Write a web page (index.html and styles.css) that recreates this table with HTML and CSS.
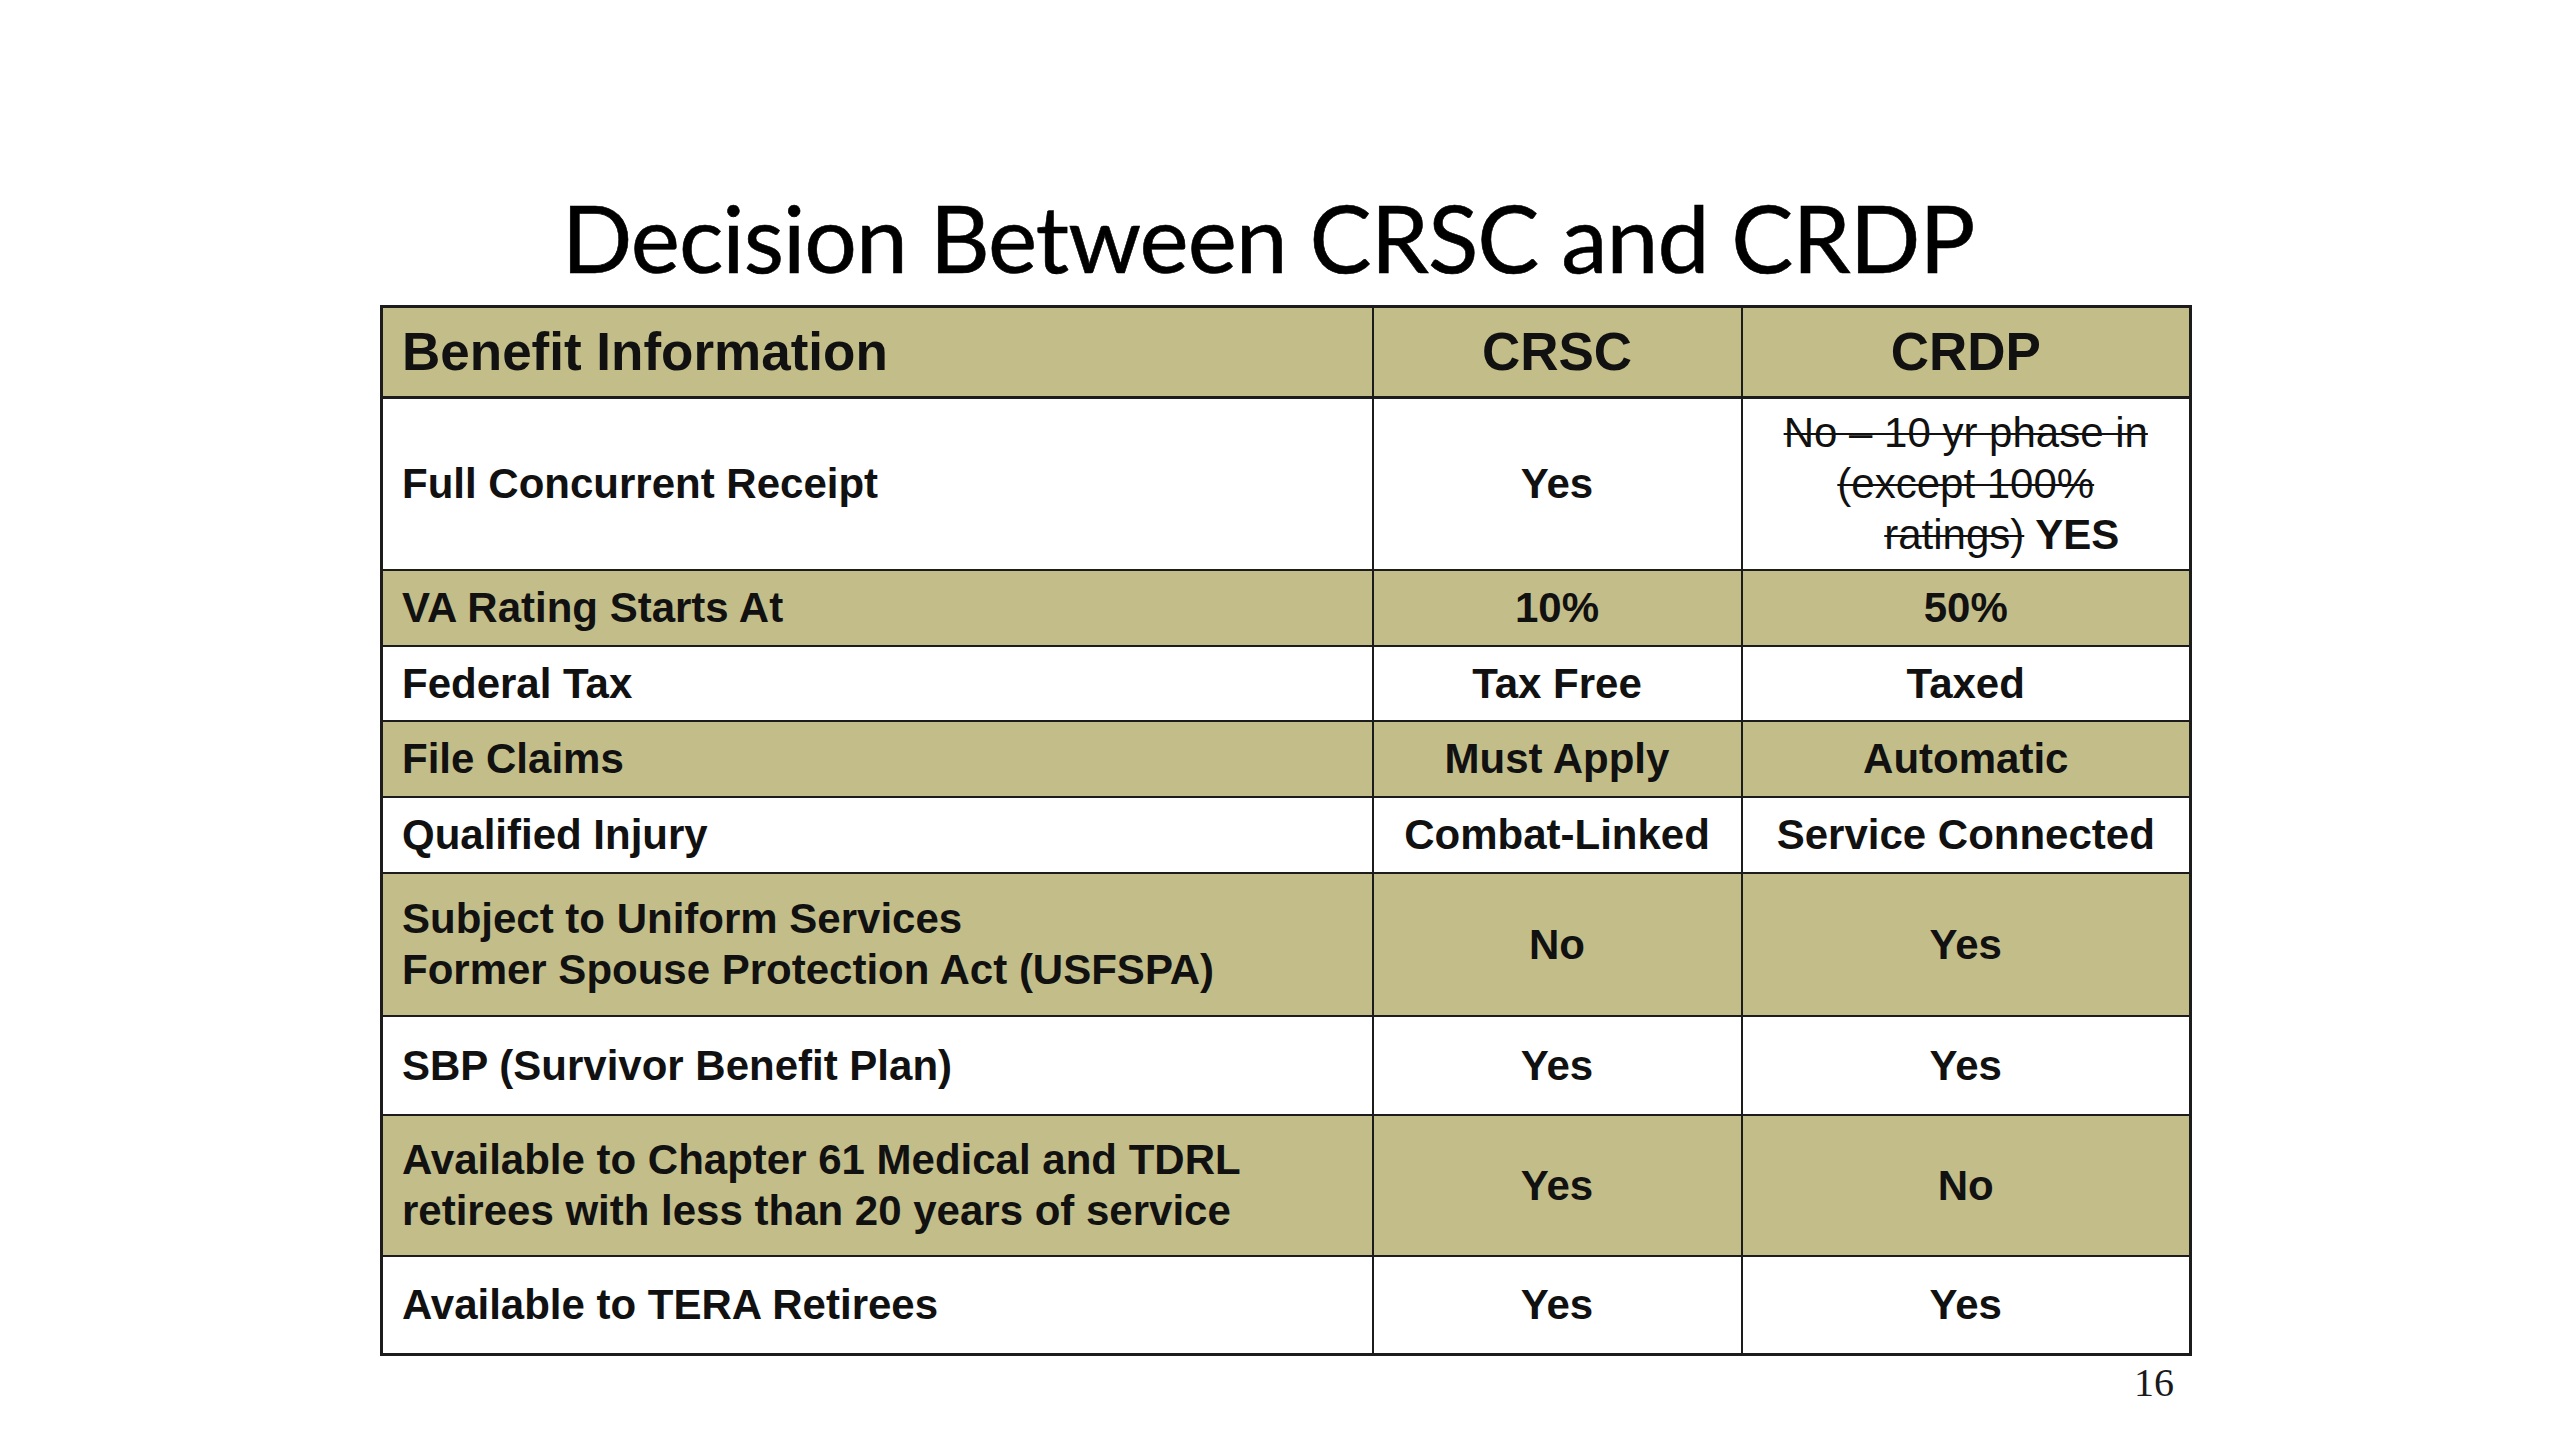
FILE: index.html
```html
<!DOCTYPE html>
<html lang="en">
<head>
<meta charset="utf-8">
<title>Decision Between CRSC and CRDP</title>
<link rel="stylesheet" href="styles.css">
</head>
<body>
<div class="slide">
  <h1 class="title">Decision Between CRSC and CRDP</h1>
  <table class="grid">
    <colgroup>
      <col class="c1">
      <col class="c2">
      <col class="c3">
    </colgroup>
    <thead>
      <tr class="row-head olive">
        <th class="label">Benefit Information</th>
        <th>CRSC</th>
        <th>CRDP</th>
      </tr>
    </thead>
    <tbody>
      <tr class="row-tall">
        <td class="label">Full Concurrent Receipt</td>
        <td>Yes</td>
        <td class="crdp-note">
          <span class="strike">No – 10 yr phase in</span><br>
          <span class="strike">(except 100%</span><br>
          <span class="shift"><span class="strike">ratings)</span> YES</span>
        </td>
      </tr>
      <tr class="row-s olive">
        <td class="label">VA Rating Starts At</td>
        <td>10%</td>
        <td>50%</td>
      </tr>
      <tr class="row-s2">
        <td class="label">Federal Tax</td>
        <td>Tax Free</td>
        <td>Taxed</td>
      </tr>
      <tr class="row-s olive">
        <td class="label">File Claims</td>
        <td>Must Apply</td>
        <td>Automatic</td>
      </tr>
      <tr class="row-s">
        <td class="label">Qualified Injury</td>
        <td>Combat-Linked</td>
        <td>Service Connected</td>
      </tr>
      <tr class="row-l olive">
        <td class="label">Subject to Uniform Services<br>Former Spouse Protection Act (USFSPA)</td>
        <td>No</td>
        <td>Yes</td>
      </tr>
      <tr class="row-m">
        <td class="label">SBP (Survivor Benefit Plan)</td>
        <td>Yes</td>
        <td>Yes</td>
      </tr>
      <tr class="row-l2 olive">
        <td class="label">Available to Chapter 61 Medical and TDRL<br>retirees with less than 20 years of service</td>
        <td>Yes</td>
        <td>No</td>
      </tr>
      <tr class="row-m">
        <td class="label">Available to TERA Retirees</td>
        <td>Yes</td>
        <td>Yes</td>
      </tr>
    </tbody>
  </table>
  <div class="footer">
    <span class="page-num">16</span>
  </div>
</div>
</body>
</html>
```

FILE: styles.css
```css
html, body {
  margin: 0;
  padding: 0;
  background: #ffffff;
}

.slide {
  width: 2560px;
  height: 1440px;
  box-sizing: border-box;
  padding-top: 180px;
  display: flex;
  flex-direction: column;
  background: #ffffff;
}

.title {
  margin: 0 0 10px 0;
  padding-right: 24px;
  text-align: center;
  font-family: "Lato", "Open Sans", sans-serif;
  font-weight: 400;
  font-size: 93px;
  line-height: 115px;
  color: #000000;
  letter-spacing: -1px;
  -webkit-text-stroke: 0.6px #000000;
}

.grid {
  margin-left: 380px;
  width: 1809px;
  border-collapse: collapse;
  table-layout: fixed;
  font-family: "Liberation Sans", Arial, sans-serif;
  font-weight: 700;
  color: #111111;
  border: 3px solid #1c1c1c;
}

.c1 { width: 991px; }
.c2 { width: 369px; }
.c3 { width: 449px; }

.grid th,
.grid td {
  border: 2px solid #1c1c1c;
  padding: 0 18px;
  text-align: center;
  vertical-align: middle;
  font-size: 42px;
  line-height: 51px;
  box-sizing: border-box;
}

.grid th {
  font-size: 53px;
  line-height: 60px;
}

.grid .label {
  text-align: left;
  padding-left: 19px;
}

.olive {
  background: #c3be89;
}

.row-head { height: 91px; }
.row-tall { height: 172px; }
.row-s { height: 76px; }
.row-s2 { height: 75px; }
.row-m { height: 99px; }
.row-l { height: 143px; }
.row-l2 { height: 141px; }

.grid thead tr {
  border-bottom: 3px solid #1c1c1c;
}

.crdp-note {
  line-height: 51px;
}

.strike {
  font-weight: 400;
  text-decoration: line-through;
  text-decoration-thickness: 2px;
}

.shift {
  padding-left: 72px;
}

.footer {
  display: flex;
  justify-content: flex-end;
  padding-right: 386px;
  padding-top: 4px;
}

.page-num {
  font-family: "Liberation Serif", "Times New Roman", serif;
  font-size: 40px;
  line-height: 46px;
  color: #1a1a1a;
}
```
